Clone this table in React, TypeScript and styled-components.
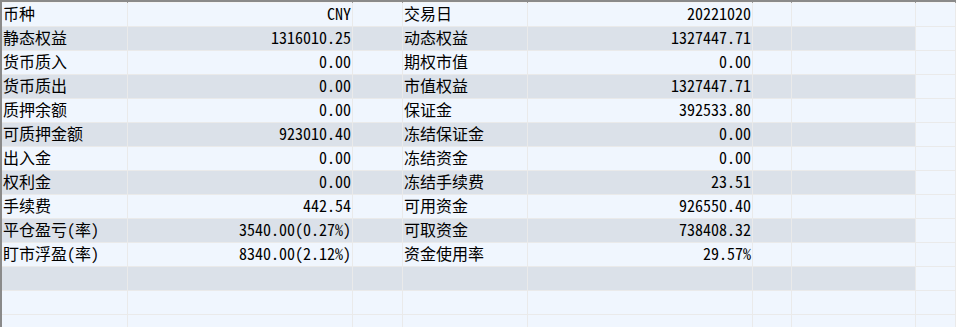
import React from "react";
import styled, { createGlobalStyle } from "styled-components";

const GlobalStyle = createGlobalStyle`
  html, body {
    margin: 0;
    padding: 0;
    background: #ffffff;
  }
  body {
    font-family: "Noto Sans CJK SC", "Liberation Sans", sans-serif;
  }
`;

const COLS = "126px 225px 50px 125px 225px 39px 124px 1fr";

const Frame = styled.div`
  width: 956px;
  height: 327px;
  overflow: hidden;
  box-sizing: border-box;
  border-left: 2px solid #8a8a8a;
  background: #f0f6fe;
`;

const HeaderStrip = styled.div`
  display: grid;
  grid-template-columns: ${COLS};
  height: 3px;
  box-sizing: border-box;
  border-top: 2px solid #8a8a8a;
  background: #f4f4f4;
`;

const HeaderTick = styled.div`
  border-right: 1px solid #9a9a9a;
`;

const Row = styled.div<{ $shade?: boolean }>`
  display: grid;
  grid-template-columns: ${COLS};
  height: 24px;
  background: ${(p) => (p.$shade ? "#dbe1e9" : "#f0f6fe")};
`;

const Cell = styled.div<{ $align?: "left" | "right" }>`
  box-sizing: border-box;
  height: 24px;
  border-right: 1px solid #eaeaea;
  border-bottom: 1px solid #eaeaea;
  padding: 0 1px;
  font-size: 16px;
  line-height: 21px;
  color: #000;
  white-space: nowrap;
  text-align: ${(p) => (p.$align === "right" ? "right" : "left")};
  font-feature-settings: "hwid" 1;
`;

const Filler = styled(Cell)`
  background: #f0f6fe;
`;

type Line = [string, string, string, string];

const data: Line[] = [
  ["币种", "CNY", "交易日", "20221020"],
  ["静态权益", "1316010.25", "动态权益", "1327447.71"],
  ["货币质入", "0.00", "期权市值", "0.00"],
  ["货币质出", "0.00", "市值权益", "1327447.71"],
  ["质押余额", "0.00", "保证金", "392533.80"],
  ["可质押金额", "923010.40", "冻结保证金", "0.00"],
  ["出入金", "0.00", "冻结资金", "0.00"],
  ["权利金", "0.00", "冻结手续费", "23.51"],
  ["手续费", "442.54", "可用资金", "926550.40"],
  ["平仓盈亏(率)", "3540.00(0.27%)", "可取资金", "738408.32"],
  ["盯市浮盈(率)", "8340.00(2.12%)", "资金使用率", "29.57%"],
  ["", "", "", ""],
];

export default function App() {
  return (
    <>
      <GlobalStyle />
      <Frame>
        <HeaderStrip>
          {Array.from({ length: 8 }).map((_, i) => (
            <HeaderTick key={i} />
          ))}
        </HeaderStrip>
        {data.map((r, i) => (
          <Row key={i} $shade={i % 2 === 1}>
            <Cell>{r[0]}</Cell>
            <Cell $align="right">{r[1]}</Cell>
            <Cell />
            <Cell>{r[2]}</Cell>
            <Cell $align="right">{r[3]}</Cell>
            <Cell />
            <Cell />
            <Filler />
          </Row>
        ))}
        {[0, 1].map((i) => (
          <Row key={`e${i}`}>
            <Cell />
            <Cell />
            <Cell />
            <Cell />
            <Cell />
            <Cell />
            <Cell />
            <Filler />
          </Row>
        ))}
      </Frame>
    </>
  );
}
